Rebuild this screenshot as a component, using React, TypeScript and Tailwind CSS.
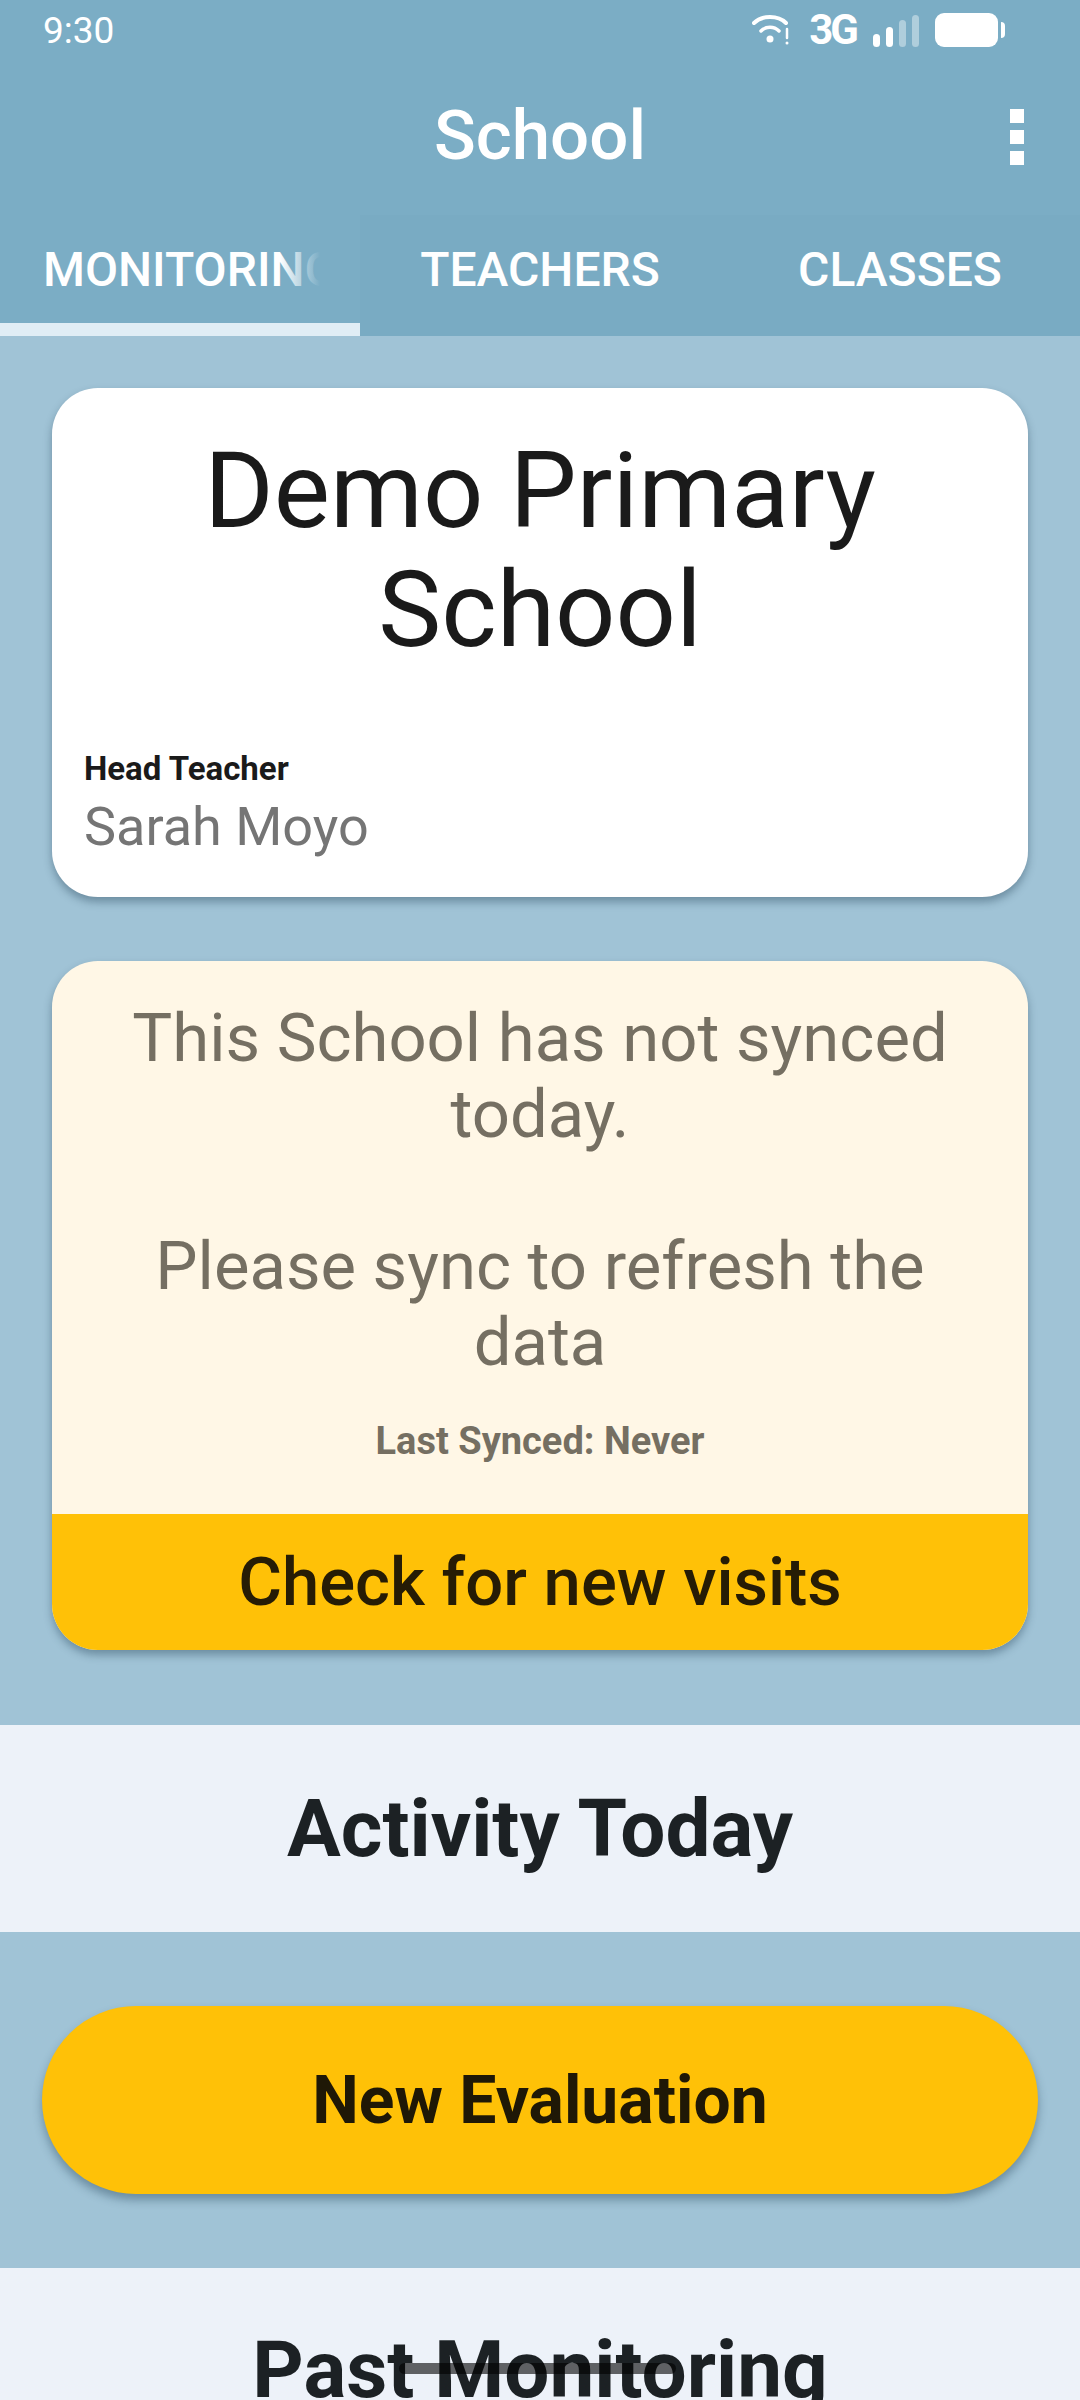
import React from 'react';

const roboto = "font-['Roboto','Noto_Sans',sans-serif]";

function StatusIcons() {
  return (
    <div className="flex items-center text-white">
      <svg width="40" height="34" viewBox="0 0 40 34" className="mr-[17px]" fill="none" stroke="#fff" strokeLinecap="round">
        <path d="M2 10 C10 2 26 2 34 10" strokeWidth="4" />
        <path d="M9 18 C14 13 22 13 27 18" strokeWidth="3.5" />
        <circle cx="18" cy="26" r="3.5" fill="#fff" stroke="none" />
        <path d="M35 16 V25" strokeWidth="2.5" />
        <circle cx="35" cy="30" r="1.5" fill="#fff" stroke="none" />
      </svg>
      <span className="text-[42px] leading-none font-bold tracking-[-3px] font-['Roboto',sans-serif] mr-[17px]">3G</span>
      <div className="flex items-end gap-[6px] h-[32px] mr-[16px] mt-[2px]">
        <div className="w-[7px] h-[13px] rounded-full bg-white" />
        <div className="w-[7px] h-[20px] rounded-full bg-white" />
        <div className="w-[7px] h-[27px] rounded-full bg-white/40" />
        <div className="w-[7px] h-[32px] rounded-full bg-white/40" />
      </div>
      <div className="w-[63px] h-[34px] rounded-[9px] bg-white" />
      <div className="ml-[3px] w-[4px] h-[16px] rounded-r-full bg-white" />
    </div>
  );
}

function Header() {
  return (
    <div className="bg-[#7badc5] h-[215px] flex flex-col">
      <div className="h-[60px] pl-[43px] pr-[75px] flex items-center justify-between">
        <span className={`text-[37px] leading-none text-white ${roboto}`}>9:30</span>
        <StatusIcons />
      </div>
      <div className="relative flex-1 flex items-center justify-center">
        <span className={`text-[69px] leading-none font-medium text-white -mt-[4px] ${roboto}`}>School</span>
        <div className="absolute right-[56px] top-[49px] flex flex-col gap-[7px]">
          <div className="w-[14px] h-[14px] bg-white" />
          <div className="w-[14px] h-[14px] bg-white" />
          <div className="w-[14px] h-[14px] bg-white" />
        </div>
      </div>
    </div>
  );
}

function Tabs() {
  return (
    <div className={`h-[121px] bg-[#79abc3] grid grid-cols-3 text-[48px] font-medium text-white ${roboto}`}>
      <div className="relative bg-[#7badc5] border-b-[13px] border-[#e0edf5] overflow-hidden pl-[43px] pt-[28px]">
        <span className="leading-[54px] whitespace-nowrap block">MONITORING</span>
        <div className="absolute left-[280px] right-[40px] top-0 bottom-0 bg-gradient-to-r from-[#7badc500] to-[#7badc5]" />
        <div className="absolute left-[320px] right-0 top-0 bottom-0 bg-[#7badc5]" />
      </div>
      <div className="pt-[28px] text-center leading-[54px]">TEACHERS</div>
      <div className="pt-[28px] text-center leading-[54px]">CLASSES</div>
    </div>
  );
}

function SchoolCard() {
  return (
    <div className="mx-[52px] h-[509px] bg-white rounded-[46px] shadow-[0_5px_8px_rgba(30,60,80,0.4)] flex flex-col">
      <h1 className="mt-[44px] text-[106px] leading-[119px] text-[#1a1a1a] font-normal text-center">
        Demo Primary
        <br />
        School
      </h1>
      <div className="mt-[81px] pl-[32px] text-[33px] leading-[36px] font-bold text-[#1a1a1a]">Head Teacher</div>
      <div className="pl-[32px] mt-[10px] text-[54px] leading-[60px] text-[#757575]">Sarah Moyo</div>
    </div>
  );
}

function SyncCard() {
  return (
    <div className="mx-[52px] mt-[64px] h-[689px] bg-[#fff7e6] rounded-[46px] overflow-hidden shadow-[0_5px_8px_rgba(30,60,80,0.4)] flex flex-col">
      <div className="flex-1 text-center text-[#756f62]">
        <p className="mt-[39px] text-[67px] leading-[76px]">
          This School has not synced
          <br />
          today.
        </p>
        <p className="mt-[76px] text-[67px] leading-[76px]">
          Please sync to refresh the
          <br />
          data
        </p>
        <p className="mt-[40px] text-[38px] leading-[42px] font-bold">Last Synced: Never</p>
      </div>
      <div className="h-[136px] bg-[#ffc107] flex items-center justify-center text-[67px] font-medium text-[#261c05]">
        Check for new visits
      </div>
    </div>
  );
}

export default function App() {
  return (
    <div className={`relative w-[1080px] h-[2400px] overflow-hidden bg-[#a0c3d6] ${roboto}`}>
      <Header />
      <Tabs />
      <div className="pt-[52px]">
        <SchoolCard />
        <SyncCard />
      </div>
      <div className="mt-[75px] h-[207px] bg-[#edf2f9] flex items-center justify-center text-[80px] font-bold text-[#1c2124]">
        Activity Today
      </div>
      <div className="mx-[42px] mt-[74px] h-[188px] rounded-full bg-[#ffc107] shadow-[0_6px_10px_rgba(30,60,80,0.4)] flex items-center justify-center text-[66px] font-bold text-[#1f1806]">
        New Evaluation
      </div>
      <div className="mt-[74px] h-[300px] bg-[#edf2f9] pt-[57px] text-center text-[80px] leading-[90px] font-bold text-[#1c2124]">
        Past Monitoring
      </div>
      <div className="absolute left-[399px] top-[2363px] w-[277px] h-[11px] rounded-full bg-black/60" />
    </div>
  );
}
